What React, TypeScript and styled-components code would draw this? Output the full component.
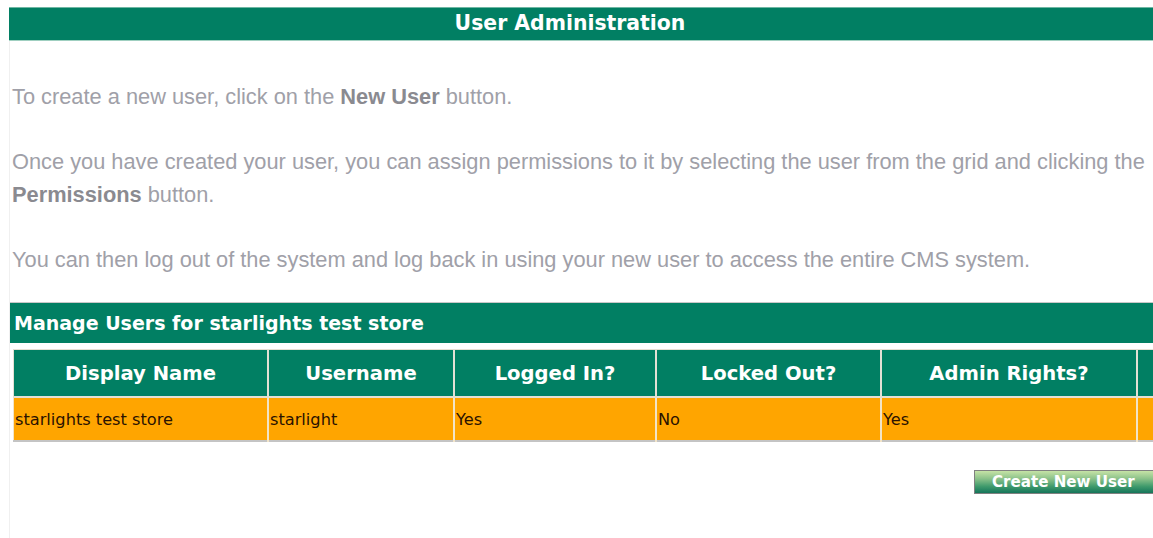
import styled, { createGlobalStyle } from 'styled-components';

const GlobalStyle = createGlobalStyle`
  html, body {
    margin: 0;
    padding: 0;
    background: #ffffff;
    overflow: hidden;
  }
`;

const StyledPage = styled.div`
  width: 1180px;
  margin-left: 9px;
  padding-top: 7px;
  height: 531px;
  display: flex;
  flex-direction: column;
`;

const StyledTitleBar = styled.div`
  height: 32px;
  border-top: 1px solid #6fb7a3;
  border-bottom: 1px solid #9fcfc0;
  background: #017f63;
  color: #ffffff;
  font-family: 'DejaVu Sans', Verdana, sans-serif;
  font-weight: bold;
  font-size: 20.4px;
  line-height: 31px;
  text-align: center;
  padding-right: 58px;
`;

const StyledContent = styled.div`
  flex: 1;
  border-left: 1px solid #f0f0f0;
  padding-top: 39px;
`;

const StyledParagraph = styled.p`
  width: 1141px;
  margin: 0 0 32px 2px;
  font-family: 'Liberation Sans', Arial, sans-serif;
  font-size: 21.8px;
  line-height: 33px;
  color: #a0a0a8;

  b {
    color: #8a8a90;
  }
`;

const StyledSectionBar = styled.div`
  margin-top: -6px;
  height: 40px;
  border-top: 1px solid #c8c8c8;
  background: #017f63;
  color: #ffffff;
  font-family: 'DejaVu Sans', Verdana, sans-serif;
  font-weight: bold;
  font-size: 19px;
  line-height: 41px;
  padding-left: 4px;
`;

const StyledTable = styled.table`
  margin: 6px 0 0 3px;
  border-collapse: collapse;
  table-layout: fixed;
  width: 1170px;
  border-bottom: 2px solid #c4c4c4;
`;

const StyledHeadCell = styled.th<{ $width: number }>`
  width: ${(p) => p.$width}px;
  height: 46px;
  padding: 0;
  border: 1px solid #e4e0d4;
  border-width: 1px 2px 2px 1px;
  background: #017f63;
  color: #ffffff;
  font-family: 'DejaVu Sans', Verdana, sans-serif;
  font-weight: bold;
  font-size: 19.6px;
  text-align: center;
`;

const StyledCell = styled.td`
  height: 42px;
  padding: 0 0 0 1px;
  border: 1px solid #f2e4c8;
  border-width: 0 2px 0 1px;
  background: #ffa500;
  color: #2a1200;
  font-family: 'DejaVu Sans', Verdana, sans-serif;
  font-size: 16.2px;
  text-align: left;
`;

const StyledButtonRow = styled.div`
  display: flex;
  justify-content: flex-end;
  padding-top: 28px;
  width: 1150px;
`;

const StyledButton = styled.button`
  width: 186px;
  height: 24px;
  border: 1px solid #808080;
  background: linear-gradient(#c6e3a6 0%, #8cc28a 35%, #3f9a6c 70%, #15755a 100%);
  color: #ffffff;
  font-family: 'DejaVu Sans', Verdana, sans-serif;
  font-weight: bold;
  font-size: 15.1px;
  text-align: left;
  padding: 0 0 0 17px;
  cursor: pointer;
`;

const columns = [
  { label: 'Display Name', width: 253 },
  { label: 'Username', width: 184 },
  { label: 'Logged In?', width: 200 },
  { label: 'Locked Out?', width: 223 },
  { label: 'Admin Rights?', width: 254 },
  { label: '', width: 56 },
];

const users = [
  { displayName: 'starlights test store', username: 'starlight', loggedIn: 'Yes', lockedOut: 'No', admin: 'Yes' },
];

export default function App() {
  return (
    <>
      <GlobalStyle />
      <StyledPage>
        <StyledTitleBar>User Administration</StyledTitleBar>
        <StyledContent>
          <StyledParagraph>
            To create a new user, click on the <b>New User</b> button.
          </StyledParagraph>
          <StyledParagraph>
            Once you have created your user, you can assign permissions to it by selecting the user from the grid and
            clicking the <b>Permissions</b> button.
          </StyledParagraph>
          <StyledParagraph>
            You can then log out of the system and log back in using your new user to access the entire CMS system.
          </StyledParagraph>

          <StyledSectionBar>Manage Users for starlights test store</StyledSectionBar>
          <StyledTable>
            <thead>
              <tr>
                {columns.map((col) => (
                  <StyledHeadCell key={col.label || 'extra'} $width={col.width}>
                    {col.label}
                  </StyledHeadCell>
                ))}
              </tr>
            </thead>
            <tbody>
              {users.map((user) => (
                <tr key={user.username}>
                  <StyledCell>{user.displayName}</StyledCell>
                  <StyledCell>{user.username}</StyledCell>
                  <StyledCell>{user.loggedIn}</StyledCell>
                  <StyledCell>{user.lockedOut}</StyledCell>
                  <StyledCell>{user.admin}</StyledCell>
                  <StyledCell />
                </tr>
              ))}
            </tbody>
          </StyledTable>

          <StyledButtonRow>
            <StyledButton>Create New User</StyledButton>
          </StyledButtonRow>
        </StyledContent>
      </StyledPage>
    </>
  );
}
